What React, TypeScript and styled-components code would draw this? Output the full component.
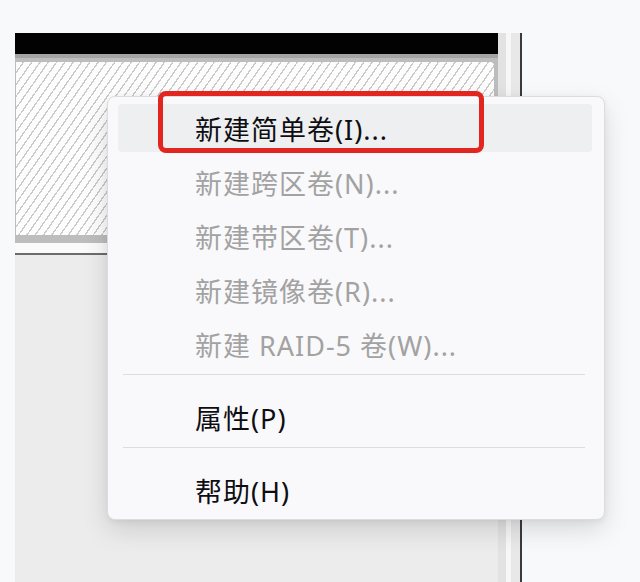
import styled, { createGlobalStyle } from "styled-components";

const GlobalStyle = createGlobalStyle`
  html, body {
    margin: 0;
    padding: 0;
    background: #f8f9fb;
  }
  body {
    width: 640px;
    height: 582px;
    overflow: hidden;
    font-family: "Noto Sans", "Noto Sans CJK SC", sans-serif;
  }
`;

const Page = styled.div`
  position: relative;
  width: 640px;
  height: 582px;
  padding: 33px 0 0 15px;
  box-sizing: border-box;
  display: flex;
  align-items: stretch;
`;

const DiskPanel = styled.div`
  width: 483px;
  display: flex;
  flex-direction: column;
  background: #ececec;
`;

const DiskHeader = styled.div`
  height: 21px;
  background: #020202;
`;

const DiskFrame = styled.div`
  background: linear-gradient(to bottom, #a4a4a4 0 4px, #bdbdbd 4px 100%);
  padding: 8px 4px 8px 1px;
`;

const Hatch = styled.div`
  height: 173px;
  border-radius: 0 4px 0 0;
  background-color: #fdfdfd;
  background-image: repeating-linear-gradient(
    125deg,
    #fdfdfd 0px,
    #fdfdfd 5.5px,
    #cacaca 5.5px,
    #cacaca 6.8px
  );
`;

const DiskGap = styled.div`
  height: 10px;
  background: #fafafa;
  border-bottom: 2px solid #6c6c6c;
`;

const RightStrip = styled.div`
  width: 22px;
  background: linear-gradient(
    to right,
    #e2e2e2 0 8px,
    #f7f7f7 8px 13px,
    #e8e8e8 13px 100%
  );
  border-right: 2px solid #3b3b3b;
`;

const Menu = styled.div`
  position: absolute;
  left: 107px;
  top: 96px;
  width: 498px;
  box-sizing: border-box;
  padding: 4px 12px 2px 10px;
  background: #f9f9fb;
  border: 1px solid #dcdcde;
  border-radius: 8px;
  box-shadow: 0 10px 26px rgba(0, 0, 0, 0.13), 0 2px 6px rgba(0, 0, 0, 0.06);
  display: flex;
  flex-direction: column;
`;

const Item = styled.div<{ $disabled?: boolean; $active?: boolean }>`
  position: relative;
  height: 48px;
  margin: 3px 0;
  padding-left: 77px;
  display: flex;
  align-items: center;
  border-radius: 4px;
  font-size: 27px;
  letter-spacing: 1px;
  white-space: nowrap;
  color: ${(p) => (p.$disabled ? "#a2a2a2" : "#0e0e12")};
  background: ${(p) => (p.$active ? "#eeeff1" : "transparent")};
`;

const Separator = styled.div`
  height: 1px;
  margin: 3px 7px 15px 5px;
  background: #dddde0;
`;

const Callout = styled.div`
  position: absolute;
  left: 40px;
  top: -13px;
  width: 326px;
  height: 62px;
  box-sizing: border-box;
  border: 5px solid #e2261f;
  border-radius: 8px;
`;

const volumeItems = [
  { label: "新建简单卷(I)...", disabled: false, active: true },
  { label: "新建跨区卷(N)...", disabled: true },
  { label: "新建带区卷(T)...", disabled: true },
  { label: "新建镜像卷(R)...", disabled: true },
  { label: "新建 RAID-5 卷(W)...", disabled: true },
];

export default function App() {
  return (
    <>
      <GlobalStyle />
      <Page>
        <DiskPanel>
          <DiskHeader />
          <DiskFrame>
            <Hatch />
          </DiskFrame>
          <DiskGap />
        </DiskPanel>
        <RightStrip />

        <Menu>
          {volumeItems.map((it) => (
            <Item key={it.label} $disabled={it.disabled} $active={it.active}>
              {it.label}
              {it.active && <Callout />}
            </Item>
          ))}
          <Separator />
          <Item>属性(P)</Item>
          <Separator />
          <Item>帮助(H)</Item>
        </Menu>
      </Page>
    </>
  );
}
